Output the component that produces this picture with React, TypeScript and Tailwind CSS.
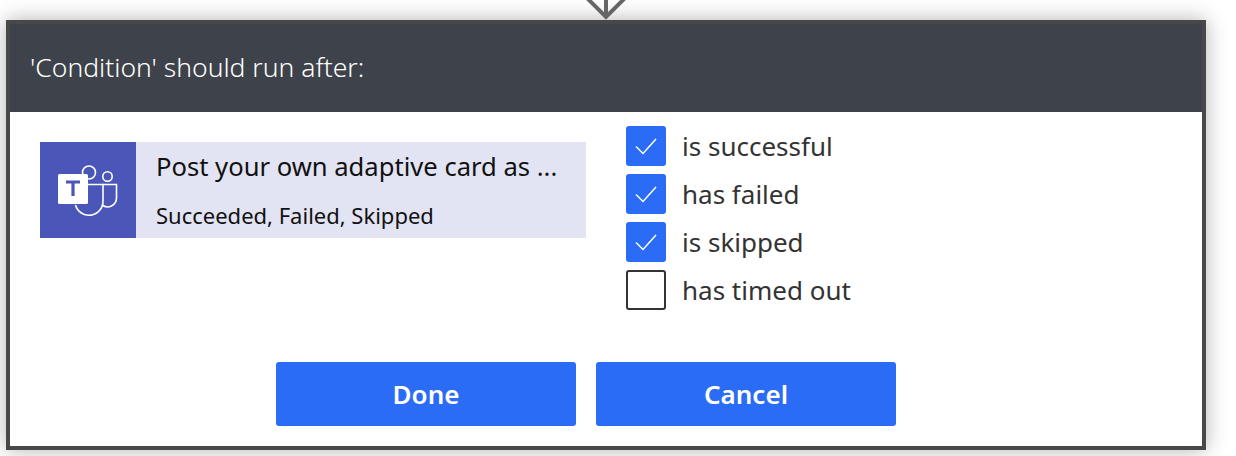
const font = "font-['Noto_Sans','Open_Sans',sans-serif]";

const options = [
  { label: "is successful", checked: true },
  { label: "has failed", checked: true },
  { label: "is skipped", checked: true },
  { label: "has timed out", checked: false },
];

function TeamsIcon() {
  return (
    <svg width="96" height="96" viewBox="0 0 96 96" fill="none">
      <circle cx="49" cy="30.5" r="6.5" stroke="#fff" strokeWidth="1.6" />
      <circle cx="67.5" cy="34.5" r="4.7" stroke="#fff" strokeWidth="1.6" />
      <path d="M48 42.5H63V59A14 14 0 0 1 35.5 63" stroke="#fff" strokeWidth="1.6" />
      <path d="M63 42.5H76.5V56A9 9 0 0 1 62 63" stroke="#fff" strokeWidth="1.6" />
      <rect x="18" y="32" width="30" height="30" rx="1.5" fill="#fff" />
      <path d="M26 40H40M33 40V54" stroke="#4a57b8" strokeWidth="3.2" />
    </svg>
  );
}

function Arrow() {
  return (
    <svg width="44" height="20" viewBox="0 0 44 20" fill="none" className="block">
      <path d="M22 -6V17M2 -3L22 17L42 -3" stroke="#666" strokeWidth="4" />
    </svg>
  );
}

function Checkbox({ label, checked }: { label: string; checked: boolean }) {
  return (
    <div className="flex items-center h-10">
      {checked ? (
        <span className="w-10 h-10 rounded-[3px] bg-[#2b6cf6] flex items-center justify-center">
          <svg width="24" height="20" viewBox="0 0 24 20" fill="none">
            <path d="M2 10.5L9 17.5L22 3" stroke="#fff" strokeWidth="1.5" />
          </svg>
        </span>
      ) : (
        <span className="w-10 h-10 rounded-[3px] border-2 border-[#333] bg-white" />
      )}
      <span className="ml-4 text-[26px] leading-10 text-[#333]">{label}</span>
    </div>
  );
}

export default function App() {
  return (
    <div className={`w-[1236px] h-[456px] overflow-hidden bg-white pl-1.5 ${font}`}>
      <div className="w-[1200px] h-5 flex justify-center overflow-hidden">
        <Arrow />
      </div>
      <div className="w-[1200px] h-[430px] border-4 border-[#484848] bg-white shadow-[0_0_20px_rgba(0,0,0,0.3)] flex flex-col">
        <div className="h-[88px] bg-[#3e424a] flex items-center pl-5 text-[26.5px] font-light text-white">
          'Condition' should run after:
        </div>
        <div className="flex pl-[30px] pr-2 pt-[14px]">
          <div className="mt-4 w-[546px] h-24 flex">
            <div className="w-24 h-24 bg-[#4a57b8] shrink-0">
              <TeamsIcon />
            </div>
            <div className="flex-1 bg-[#e2e4f3] pl-5 flex flex-col text-[#111]">
              <div className="mt-[7px] text-[25.6px] leading-9">Post your own adaptive card as ...</div>
              <div className="mt-4 text-[22px] leading-7">Succeeded, Failed, Skipped</div>
            </div>
          </div>
          <div className="ml-10 flex flex-col gap-2">
            {options.map((o) => (
              <Checkbox key={o.label} label={o.label} checked={o.checked} />
            ))}
          </div>
        </div>
        <div className="flex gap-5 pl-[266px] mt-[52px]">
          <button className="w-[300px] h-16 rounded-[3px] bg-[#2b6cf6] text-white text-[26px] font-semibold">Done</button>
          <button className="w-[300px] h-16 rounded-[3px] bg-[#2b6cf6] text-white text-[26px] font-semibold">Cancel</button>
        </div>
      </div>
    </div>
  );
}
